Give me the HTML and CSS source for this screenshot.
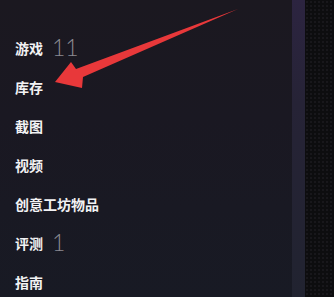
FILE: index.html
```html
<!DOCTYPE html>
<html lang="zh">
<head>
<meta charset="utf-8">
<link rel="stylesheet" href="styles.css">
</head>
<body>
<div class="page">
  <nav class="panel">
    <ul class="menu">
      <li class="item"><span class="label">游戏</span><span class="count">11</span></li>
      <li class="item"><span class="label">库存</span></li>
      <li class="item"><span class="label">截图</span></li>
      <li class="item"><span class="label">视频</span></li>
      <li class="item"><span class="label">创意工坊物品</span></li>
      <li class="item"><span class="label">评测</span><span class="count">1</span></li>
      <li class="item"><span class="label">指南</span></li>
    </ul>
  </nav>
  <div class="edge"></div>
  <div class="outside"></div>
  <svg class="arrow" width="334" height="297" viewBox="0 0 334 297">
    <polygon points="55,82 71,62 76,69 238,9 83,77 82,88" fill="#e8383a"/>
  </svg>
</div>
</body>
</html>
```
FILE: styles.css
```css
html, body {
  margin: 0;
  padding: 0;
  background: #0e0d10;
}
.page {
  position: relative;
  width: 334px;
  height: 297px;
  display: flex;
  overflow: hidden;
}
.panel {
  width: 292px;
  background: linear-gradient(180deg, #1b1820 0%, #1a1822 40%, #181a24 100%);
}
.edge {
  width: 13px;
  background: linear-gradient(180deg, #2c2440 0%, #262336 35%, #212330 100%);
}
.outside {
  flex: 1;
  background-color: #0d0d0f;
  background-image: radial-gradient(circle, #18171b 1px, transparent 1.2px);
  background-size: 4px 4px;
}
.menu {
  list-style: none;
  margin: 0;
  padding: 28px 0 0 15px;
}
.item {
  height: 39px;
  display: flex;
  align-items: center;
  gap: 9px;
}
.label {
  font-family: "Noto Sans CJK SC", "Noto Sans", sans-serif;
  font-size: 14px;
  font-weight: 700;
  color: #f2f2f4;
}
.count {
  font-family: Lato, "Noto Sans", sans-serif;
  font-weight: 300;
  font-size: 23px;
  color: #8c8b92;
  line-height: 1;
}
.arrow {
  position: absolute;
  left: 0;
  top: 0;
}
```
